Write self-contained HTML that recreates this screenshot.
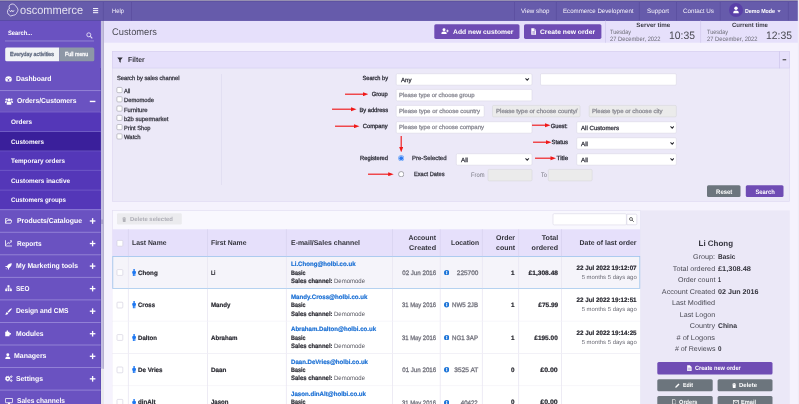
<!DOCTYPE html>
<html lang="en"><head><meta charset="utf-8"><title>Customers</title>
<style>
html,body{margin:0;padding:0;}
body{width:799px;height:404px;overflow:hidden;position:relative;font-family:"Liberation Sans",sans-serif;background:#f8f6fe;text-rendering:geometricPrecision;}
.t{white-space:nowrap;}
#app{position:absolute;left:0;top:0;width:799px;height:404px;overflow:hidden;will-change:transform;}
#app div,#app svg{position:absolute;}
#app b{font-weight:bold;}
</style></head><body><div id="app">
<svg style="left:0;top:0" width="799" height="404" viewBox="0 0 799 404">
<rect x="0" y="0" width="799" height="404" fill="#f5f2fd"/>
<rect x="0" y="20" width="104" height="384" fill="#e9e8ee"/>
<rect x="0" y="20" width="104" height="348.7" fill="#c3bde0"/>
<rect x="103.2" y="20" width="0.8" height="348.7" fill="#b3aecb"/>
<rect x="0" y="20" width="100.9" height="384" fill="#6a52c1"/>
<rect x="100" y="68" width="0.9" height="336" fill="#5d49b4"/>
<rect x="5" y="40.4" width="89" height="1.1" fill="#8e7fd2"/>
<path d="M6.7 47.4 H59.2 A0.0 0.0 0 0 1 59.2 47.4 V61.2 A0.0 0.0 0 0 1 59.2 61.2 H6.7 A1.5 1.5 0 0 1 5.2 59.7 V48.9 A1.5 1.5 0 0 1 6.7 47.4 Z" fill="#f1f3f6"/>
<path d="M59.2 47.4 H92.8 A1.5 1.5 0 0 1 94.3 48.9 V59.7 A1.5 1.5 0 0 1 92.8 61.2 H59.2 A0.0 0.0 0 0 1 59.2 61.2 V47.4 A0.0 0.0 0 0 1 59.2 47.4 Z" fill="#8d97a6"/>
<rect x="0" y="90.15" width="100.7" height="0.9" fill="#9787d8"/>
<rect x="89.8" y="100.75" width="5.6" height="1.4" fill="#fff"/>
<rect x="0" y="111.85" width="100.7" height="0.9" fill="#9787d8"/>
<rect x="0" y="112.3" width="100.7" height="19.5" fill="#5437b8"/>
<rect x="0" y="131.35" width="100.9" height="0.9" fill="#9485da"/>
<rect x="0" y="131.8" width="100.7" height="19.4" fill="#3a1f9b"/>
<rect x="0" y="150.75" width="100.9" height="0.9" fill="#9485da"/>
<rect x="0" y="151.2" width="100.7" height="19.2" fill="#5437b8"/>
<rect x="0" y="169.95" width="100.9" height="0.9" fill="#9485da"/>
<rect x="0" y="170.4" width="100.7" height="19.9" fill="#5437b8"/>
<rect x="0" y="189.85" width="100.9" height="0.9" fill="#9485da"/>
<rect x="0" y="190.3" width="100.7" height="19.4" fill="#5437b8"/>
<rect x="0" y="209.25" width="100.9" height="0.9" fill="#9485da"/>
<rect x="89.8" y="220.32" width="5.6" height="1.3" fill="#fff"/>
<rect x="91.95" y="218.17" width="1.3" height="5.6" fill="#fff"/>
<rect x="0" y="231.8" width="100.7" height="0.9" fill="#9787d8"/>
<rect x="89.8" y="242.88" width="5.6" height="1.3" fill="#fff"/>
<rect x="91.95" y="240.72" width="1.3" height="5.6" fill="#fff"/>
<rect x="0" y="254.35" width="100.7" height="0.9" fill="#9787d8"/>
<rect x="89.8" y="265.43" width="5.6" height="1.3" fill="#fff"/>
<rect x="91.95" y="263.28" width="1.3" height="5.6" fill="#fff"/>
<rect x="0" y="276.9" width="100.7" height="0.9" fill="#9787d8"/>
<rect x="89.8" y="287.98" width="5.6" height="1.3" fill="#fff"/>
<rect x="91.95" y="285.82" width="1.3" height="5.6" fill="#fff"/>
<rect x="0" y="299.45" width="100.7" height="0.9" fill="#9787d8"/>
<rect x="89.8" y="310.53" width="5.6" height="1.3" fill="#fff"/>
<rect x="91.95" y="308.38" width="1.3" height="5.6" fill="#fff"/>
<rect x="0" y="322" width="100.7" height="0.9" fill="#9787d8"/>
<rect x="89.8" y="333.08" width="5.6" height="1.3" fill="#fff"/>
<rect x="91.95" y="330.93" width="1.3" height="5.6" fill="#fff"/>
<rect x="0" y="344.55" width="100.7" height="0.9" fill="#9787d8"/>
<rect x="89.8" y="355.63" width="5.6" height="1.3" fill="#fff"/>
<rect x="91.95" y="353.48" width="1.3" height="5.6" fill="#fff"/>
<rect x="0" y="367.1" width="100.7" height="0.9" fill="#9787d8"/>
<rect x="89.8" y="378.18" width="5.6" height="1.3" fill="#fff"/>
<rect x="91.95" y="376.03" width="1.3" height="5.6" fill="#fff"/>
<rect x="0" y="389.65" width="100.7" height="0.9" fill="#9787d8"/>
<rect x="0" y="412.2" width="100.7" height="0.9" fill="#9787d8"/>
<rect x="101.6" y="219.5" width="0.8" height="4.5" fill="#7d75a8"/>
<rect x="104" y="20" width="695" height="22.7" fill="#e6e0fb"/>
<rect x="0" y="0" width="799" height="20.5" fill="#665bab"/>
<rect x="0" y="20.1" width="799" height="0.7" fill="#54479f"/>
<rect x="0" y="1" width="799" height="1" fill="#5f53a2"/>
<rect x="0" y="0" width="799" height="1" fill="#9690b1"/>
<rect x="102.9" y="2" width="0.8" height="18.4" fill="#5b4f9f"/>
<rect x="131.1" y="2" width="0.8" height="18.4" fill="#5b4f9f"/>
<rect x="514.1" y="2" width="0.8" height="18.4" fill="#5b4f9f"/>
<rect x="555.9" y="2" width="0.8" height="18.4" fill="#5b4f9f"/>
<rect x="638.9" y="2" width="0.8" height="18.4" fill="#5b4f9f"/>
<rect x="676" y="2" width="0.8" height="18.4" fill="#5b4f9f"/>
<rect x="719.8" y="2" width="0.8" height="18.4" fill="#5b4f9f"/>
<rect x="787.9" y="2" width="0.8" height="18.4" fill="#5b4f9f"/>
<rect x="93" y="8" width="5.2" height="1.1" fill="#f0eefa"/>
<rect x="93" y="10.05" width="5.2" height="1.1" fill="#f0eefa"/>
<rect x="93" y="12.1" width="5.2" height="1.1" fill="#f0eefa"/>
<rect x="797.8" y="0" width="1.2" height="404" fill="#efedf7"/>
<rect x="605.2" y="20.6" width="0.8" height="22.1" fill="#d3cbee"/>
<rect x="700.3" y="20.6" width="0.8" height="22.1" fill="#d3cbee"/>
<rect x="434.3" y="24.2" width="85.2" height="14.7" rx="1.6" fill="#6f4cb4"/>
<rect x="524" y="24.2" width="77.4" height="14.7" rx="1.6" fill="#6f4cb4"/>
<rect x="112.35" y="51.55" width="677" height="149.8" fill="#ece9f8" stroke="#e0dbf3" stroke-width="0.7"/>
<rect x="112.35" y="51.55" width="677" height="16.5" fill="#e6e0fb" stroke="#d8d1f1" stroke-width="0.7"/>
<rect x="779.2" y="51.2" width="0.8" height="17.2" fill="#d1c9ee"/>
<rect x="782.6" y="59.2" width="3.6" height="1.1" fill="#444"/>
<rect x="221" y="74" width="0.8" height="111" fill="#e0dcf0"/>
<rect x="116.9" y="87.45" width="5.2" height="5.2" rx="1.0" fill="#fff" stroke="#9e9ea8" stroke-width="0.6"/>
<rect x="116.9" y="96.72" width="5.2" height="5.2" rx="1.0" fill="#fff" stroke="#9e9ea8" stroke-width="0.6"/>
<rect x="116.9" y="105.99" width="5.2" height="5.2" rx="1.0" fill="#fff" stroke="#9e9ea8" stroke-width="0.6"/>
<rect x="116.9" y="115.26" width="5.2" height="5.2" rx="1.0" fill="#fff" stroke="#9e9ea8" stroke-width="0.6"/>
<rect x="116.9" y="124.53" width="5.2" height="5.2" rx="1.0" fill="#fff" stroke="#9e9ea8" stroke-width="0.6"/>
<rect x="116.9" y="133.8" width="5.2" height="5.2" rx="1.0" fill="#fff" stroke="#9e9ea8" stroke-width="0.6"/>
<rect x="396.2" y="73.7" width="135.8" height="11.5" rx="1.2" fill="#fff" stroke="#dad7e6" stroke-width="0.6"/>
<rect x="540.5" y="73.7" width="135.8" height="11.5" rx="1.2" fill="#fff" stroke="#dad7e6" stroke-width="0.6"/>
<rect x="396.2" y="89.4" width="135.8" height="11.5" rx="1.2" fill="#fff" stroke="#dad7e6" stroke-width="0.6"/>
<rect x="396.2" y="105.4" width="88" height="11.5" rx="1.2" fill="#fff" stroke="#dad7e6" stroke-width="0.6"/>
<rect x="492.5" y="105.4" width="87.5" height="11.5" rx="1.2" fill="#ebebeb" stroke="#d6d6da" stroke-width="0.6"/>
<rect x="589.2" y="105.4" width="87.1" height="11.5" rx="1.2" fill="#ebebeb" stroke="#d6d6da" stroke-width="0.6"/>
<rect x="396.2" y="121.7" width="135.8" height="11.5" rx="1.2" fill="#fff" stroke="#dad7e6" stroke-width="0.6"/>
<rect x="576.7" y="121.7" width="99.6" height="11.5" rx="1.2" fill="#fff" stroke="#dad7e6" stroke-width="0.6"/>
<rect x="576.7" y="137.7" width="99.6" height="11.5" rx="1.2" fill="#fff" stroke="#dad7e6" stroke-width="0.6"/>
<rect x="576.7" y="153.7" width="99.6" height="11.5" rx="1.2" fill="#fff" stroke="#dad7e6" stroke-width="0.6"/>
<rect x="456.3" y="153.7" width="75.7" height="11.5" rx="1.2" fill="#fff" stroke="#dad7e6" stroke-width="0.6"/>
<rect x="488" y="169.4" width="44" height="11.5" rx="1.2" fill="#ebebeb" stroke="#d6d6da" stroke-width="0.6"/>
<rect x="548.3" y="169.4" width="43.8" height="11.5" rx="1.2" fill="#ebebeb" stroke="#d6d6da" stroke-width="0.6"/>
<rect x="707" y="185.3" width="33.5" height="11.7" rx="1.5" fill="#6c757d"/>
<rect x="745.8" y="185.3" width="37.7" height="11.7" rx="1.5" fill="#6f4cb4"/>
<rect x="112.35" y="210.55" width="528.1" height="199.3" fill="#f9f8fe" stroke="#e4e0f2" stroke-width="0.7"/>
<rect x="117" y="213.3" width="64.8" height="11.3" rx="1.4" fill="#ebebee"/>
<rect x="553" y="213.7" width="73.4" height="11.2" rx="1.2" fill="#fff" stroke="#dad7e6" stroke-width="0.6"/>
<path d="M626.75 214.15 H635.65 A1.2 1.2 0 0 1 636.85 215.35 V223.55 A1.2 1.2 0 0 1 635.65 224.75 H626.75 A0.0 0.0 0 0 1 626.75 224.75 V214.15 A0.0 0.0 0 0 1 626.75 214.15 Z" fill="#fff" stroke="#d8d4e6" stroke-width="0.7"/>
<rect x="112.4" y="229.3" width="527.8" height="27.2" fill="#e6e0fb"/>
<rect x="127.9" y="229.3" width="0.8" height="26.7" fill="#d9d3f0"/>
<rect x="207.1" y="229.3" width="0.8" height="26.7" fill="#d9d3f0"/>
<rect x="285.9" y="229.3" width="0.8" height="26.7" fill="#d9d3f0"/>
<rect x="392.1" y="229.3" width="0.8" height="26.7" fill="#d9d3f0"/>
<rect x="439.8" y="229.3" width="0.8" height="26.7" fill="#d9d3f0"/>
<rect x="481.9" y="229.3" width="0.8" height="26.7" fill="#d9d3f0"/>
<rect x="518.3" y="229.3" width="0.8" height="26.7" fill="#d9d3f0"/>
<rect x="561.2" y="229.3" width="0.8" height="26.7" fill="#d9d3f0"/>
<rect x="117" y="240.4" width="5.8" height="5.8" rx="0.8" fill="#fff" stroke="#cfcbdc" stroke-width="0.6"/>
<rect x="112.8" y="256.5" width="527" height="32" fill="#f5f4fa" stroke="#9cc3ec" stroke-width="0.8"/>
<rect x="127.9" y="256.9" width="0.8" height="31.2" fill="#e9e6f2"/>
<rect x="207.1" y="256.9" width="0.8" height="31.2" fill="#e9e6f2"/>
<rect x="285.9" y="256.9" width="0.8" height="31.2" fill="#e9e6f2"/>
<rect x="392.1" y="256.9" width="0.8" height="31.2" fill="#e9e6f2"/>
<rect x="439.8" y="256.9" width="0.8" height="31.2" fill="#e9e6f2"/>
<rect x="481.9" y="256.9" width="0.8" height="31.2" fill="#e9e6f2"/>
<rect x="518.3" y="256.9" width="0.8" height="31.2" fill="#e9e6f2"/>
<rect x="561.2" y="256.9" width="0.8" height="31.2" fill="#e9e6f2"/>
<rect x="117" y="269.6" width="5.8" height="5.8" rx="0.8" fill="#fff" stroke="#cfcbdc" stroke-width="0.6"/>
<rect x="112.4" y="288.9" width="527.8" height="32.4" fill="#fff"/>
<rect x="112.4" y="320.9" width="527.8" height="0.8" fill="#e6e3ef"/>
<rect x="127.9" y="288.9" width="0.8" height="32.4" fill="#e9e6f2"/>
<rect x="207.1" y="288.9" width="0.8" height="32.4" fill="#e9e6f2"/>
<rect x="285.9" y="288.9" width="0.8" height="32.4" fill="#e9e6f2"/>
<rect x="392.1" y="288.9" width="0.8" height="32.4" fill="#e9e6f2"/>
<rect x="439.8" y="288.9" width="0.8" height="32.4" fill="#e9e6f2"/>
<rect x="481.9" y="288.9" width="0.8" height="32.4" fill="#e9e6f2"/>
<rect x="518.3" y="288.9" width="0.8" height="32.4" fill="#e9e6f2"/>
<rect x="561.2" y="288.9" width="0.8" height="32.4" fill="#e9e6f2"/>
<rect x="117" y="302.2" width="5.8" height="5.8" rx="0.8" fill="#fff" stroke="#cfcbdc" stroke-width="0.6"/>
<rect x="112.4" y="321.3" width="527.8" height="32.4" fill="#fff"/>
<rect x="112.4" y="353.3" width="527.8" height="0.8" fill="#e6e3ef"/>
<rect x="127.9" y="321.3" width="0.8" height="32.4" fill="#e9e6f2"/>
<rect x="207.1" y="321.3" width="0.8" height="32.4" fill="#e9e6f2"/>
<rect x="285.9" y="321.3" width="0.8" height="32.4" fill="#e9e6f2"/>
<rect x="392.1" y="321.3" width="0.8" height="32.4" fill="#e9e6f2"/>
<rect x="439.8" y="321.3" width="0.8" height="32.4" fill="#e9e6f2"/>
<rect x="481.9" y="321.3" width="0.8" height="32.4" fill="#e9e6f2"/>
<rect x="518.3" y="321.3" width="0.8" height="32.4" fill="#e9e6f2"/>
<rect x="561.2" y="321.3" width="0.8" height="32.4" fill="#e9e6f2"/>
<rect x="117" y="334.6" width="5.8" height="5.8" rx="0.8" fill="#fff" stroke="#cfcbdc" stroke-width="0.6"/>
<rect x="112.4" y="353.7" width="527.8" height="32.4" fill="#fff"/>
<rect x="112.4" y="385.7" width="527.8" height="0.8" fill="#e6e3ef"/>
<rect x="127.9" y="353.7" width="0.8" height="32.4" fill="#e9e6f2"/>
<rect x="207.1" y="353.7" width="0.8" height="32.4" fill="#e9e6f2"/>
<rect x="285.9" y="353.7" width="0.8" height="32.4" fill="#e9e6f2"/>
<rect x="392.1" y="353.7" width="0.8" height="32.4" fill="#e9e6f2"/>
<rect x="439.8" y="353.7" width="0.8" height="32.4" fill="#e9e6f2"/>
<rect x="481.9" y="353.7" width="0.8" height="32.4" fill="#e9e6f2"/>
<rect x="518.3" y="353.7" width="0.8" height="32.4" fill="#e9e6f2"/>
<rect x="561.2" y="353.7" width="0.8" height="32.4" fill="#e9e6f2"/>
<rect x="117" y="367" width="5.8" height="5.8" rx="0.8" fill="#fff" stroke="#cfcbdc" stroke-width="0.6"/>
<rect x="112.4" y="386.1" width="527.8" height="32.4" fill="#fff"/>
<rect x="112.4" y="418.1" width="527.8" height="0.8" fill="#e6e3ef"/>
<rect x="127.9" y="386.1" width="0.8" height="32.4" fill="#e9e6f2"/>
<rect x="207.1" y="386.1" width="0.8" height="32.4" fill="#e9e6f2"/>
<rect x="285.9" y="386.1" width="0.8" height="32.4" fill="#e9e6f2"/>
<rect x="392.1" y="386.1" width="0.8" height="32.4" fill="#e9e6f2"/>
<rect x="439.8" y="386.1" width="0.8" height="32.4" fill="#e9e6f2"/>
<rect x="481.9" y="386.1" width="0.8" height="32.4" fill="#e9e6f2"/>
<rect x="518.3" y="386.1" width="0.8" height="32.4" fill="#e9e6f2"/>
<rect x="561.2" y="386.1" width="0.8" height="32.4" fill="#e9e6f2"/>
<rect x="117" y="399.4" width="5.8" height="5.8" rx="0.8" fill="#fff" stroke="#cfcbdc" stroke-width="0.6"/>
<rect x="640.8" y="210.4" width="149" height="193.6" fill="#ebe8f7"/>
<rect x="657.3" y="362" width="115.2" height="12.4" rx="1.5" fill="#6f4cb4"/>
<rect x="657.3" y="379.3" width="55.4" height="12" rx="1.5" fill="#6c757d"/>
<rect x="717.6" y="379.3" width="54.9" height="12" rx="1.5" fill="#6c757d"/>
<rect x="657.3" y="396" width="55.4" height="12" rx="1.5" fill="#6c757d"/>
<rect x="717.6" y="396" width="54.9" height="12" rx="1.5" fill="#6c757d"/>
</svg>
<svg style="left:4px;top:1px" width="20" height="18" viewBox="0 0 449 404"><g fill="none" stroke="#e4e0f4" stroke-linecap="round" stroke-linejoin="round"><path d="M118 165 C98 108 138 68 185 68 C222 68 244 84 260 106 L300 160 C322 192 314 232 292 254 C284 292 252 314 218 318 A90 90 0 1 1 118 165 Z" stroke-width="20"/><path d="M128 213 L150 246 L175 204 L200 246 L222 213" stroke-width="15" stroke="#fff"/></g></svg>
<div class="t" style="top:2.76px;font-size:11.8px;line-height:14.16px;color:rgba(255,255,255,0.82);left:19.5px;transform-origin:0 50%;transform:scaleX(0.936) skewY(0.05deg);">oscommerce</div>
<div class="t" style="top:7.77px;font-size:6.3px;line-height:7.56px;color:#f6f4fc;left:111.5px;transform-origin:0 50%;transform:scaleX(0.926) skewY(0.05deg);">Help</div>
<div class="t" style="top:7.77px;font-size:6.3px;line-height:7.56px;color:#f6f4fc;left:520.5px;transform-origin:0 50%;transform:scaleX(0.984) skewY(0.05deg);">View shop</div>
<div class="t" style="top:7.77px;font-size:6.3px;line-height:7.56px;color:#f6f4fc;left:562.5px;transform-origin:0 50%;transform:scaleX(0.973) skewY(0.05deg);">Ecommerce Development</div>
<div class="t" style="top:7.77px;font-size:6.3px;line-height:7.56px;color:#f6f4fc;left:647px;transform-origin:0 50%;transform:scaleX(0.997) skewY(0.05deg);">Support</div>
<div class="t" style="top:7.77px;font-size:6.3px;line-height:7.56px;color:#f6f4fc;left:683px;transform-origin:0 50%;transform:scaleX(0.995) skewY(0.05deg);">Contact Us</div>
<svg style="left:729px;top:3.3px" width="14" height="14" viewBox="0 0 14 14"><circle cx="7" cy="7" r="7" fill="#5a40a8"/><circle cx="7" cy="5.2" r="1.7" fill="#fff"/><path d="M4.2 10.3 C4.2 8 5.2 7.4 7 7.4 C8.8 7.4 9.8 8 9.8 10.3 Z" fill="#fff"/></svg>
<div class="t" style="top:8.60px;font-size:5.8px;line-height:6.96px;color:#fff;font-weight:bold;left:745px;transform-origin:0 50%;transform:scaleX(0.913) skewY(0.05deg);">Demo Mode</div>
<svg style="left:777px;top:9.6px" width="4" height="3" viewBox="0 0 4 3"><path d="M0.3 0.3 L3.7 0.3 L2 2.6 Z" fill="#e8e4f6"/></svg>
<div class="t" style="top:30.17px;font-size:6.3px;line-height:7.56px;color:#fff;font-weight:bold;left:8px;transform-origin:0 50%;transform:scaleX(0.914) skewY(0.05deg);">Search...</div>
<svg style="left:85.5px;top:31.5px" width="7" height="7" viewBox="0 0 7 7"><circle cx="2.8" cy="2.8" r="2" fill="none" stroke="#e6e1f7" stroke-width="0.9"/><path d="M4.3 4.3 L6.3 6.3" stroke="#e6e1f7" stroke-width="1.1"/></svg>
<div class="t" style="top:52.30px;font-size:5.8px;line-height:6.96px;color:#57627a;left:10px;transform-origin:0 50%;transform:scaleX(0.916) skewY(0.05deg);-webkit-text-stroke:0.29px #57627a;">Everyday activities</div>
<div class="t" style="top:52.30px;font-size:5.8px;line-height:6.96px;color:#fff;left:65.1px;transform-origin:0 50%;transform:scaleX(0.911) skewY(0.05deg);-webkit-text-stroke:0.29px #fff;">Full menu</div>
<div class="t" style="top:75.34px;font-size:7.1px;line-height:8.52px;color:#fff;font-weight:bold;left:16px;transform-origin:0 50%;transform:scaleX(0.958) skewY(0.05deg);">Dashboard</div>
<svg style="left:4.8px;top:76.1px" width="7" height="6" viewBox="0 0 14 12"><path d="M7 0.5 A6.5 6.5 0 0 0 0.5 7 C0.5 8.6 1 10 1.9 11.2 L12.1 11.2 C13 10 13.5 8.6 13.5 7 A6.5 6.5 0 0 0 7 0.5 Z" fill="#fff"/><circle cx="7" cy="8" r="1.8" fill="#6a52c1"/><circle cx="4" cy="5" r="1" fill="#6a52c1"/><circle cx="10" cy="5" r="1" fill="#6a52c1"/></svg>
<div class="t" style="top:97.49px;font-size:7.1px;line-height:8.52px;color:#fff;font-weight:bold;left:16.5px;transform-origin:0 50%;transform:scaleX(0.955) skewY(0.05deg);">Orders/Customers</div>
<svg style="left:4.8px;top:97.85px" width="8" height="7" viewBox="0 0 16 14"><circle cx="8" cy="3.6" r="3" fill="#fff"/><circle cx="3" cy="3" r="2.2" fill="#fff"/><circle cx="13" cy="3" r="2.2" fill="#fff"/><path d="M3.5 13.5 L3.5 10 C3.5 7.8 5 7 8 7 C11 7 12.5 7.8 12.5 10 L12.5 13.5 Z" fill="#fff"/><path d="M0.3 10 L0.3 8 C0.3 6.4 1.3 5.6 3.2 5.6 L4 5.8 C3 6.8 2.8 8 2.8 10 Z M15.7 10 L15.7 8 C15.7 6.4 14.7 5.6 12.8 5.6 L12 5.8 C13 6.8 13.2 8 13.2 10 Z" fill="#fff"/></svg>
<div class="t" style="top:119.42px;font-size:6.6px;line-height:7.92px;color:#fff;font-weight:bold;left:11px;transform-origin:0 50%;transform:scaleX(0.971) skewY(0.05deg);">Orders</div>
<div class="t" style="top:138.87px;font-size:6.6px;line-height:7.92px;color:#fff;font-weight:bold;left:11px;transform-origin:0 50%;transform:scaleX(0.958) skewY(0.05deg);">Customers</div>
<div class="t" style="top:158.17px;font-size:6.6px;line-height:7.92px;color:#fff;font-weight:bold;left:11px;transform-origin:0 50%;transform:scaleX(0.965) skewY(0.05deg);">Temporary orders</div>
<div class="t" style="top:177.72px;font-size:6.6px;line-height:7.92px;color:#fff;font-weight:bold;left:11px;transform-origin:0 50%;transform:scaleX(0.970) skewY(0.05deg);">Customers inactive</div>
<div class="t" style="top:197.37px;font-size:6.6px;line-height:7.92px;color:#fff;font-weight:bold;left:11px;transform-origin:0 50%;transform:scaleX(0.938) skewY(0.05deg);">Customers groups</div>
<div class="t" style="top:217.02px;font-size:7.1px;line-height:8.52px;color:#fff;font-weight:bold;left:16.5px;transform-origin:0 50%;transform:scaleX(0.970) skewY(0.05deg);">Products/Catalogue</div>
<svg style="left:4.8px;top:217.775px" width="7.5" height="6" viewBox="0 0 15 12"><path d="M1 10.5 L1 1.2 L4.8 1.2 L6 2.6 L11 2.6 L11 4.6 M1 10.5 L3.5 4.8 L14 4.8 L11.6 10.5 Z" fill="none" stroke="#fff" stroke-width="1.5" stroke-linejoin="round"/></svg>
<div class="t" style="top:239.57px;font-size:7.1px;line-height:8.52px;color:#fff;font-weight:bold;left:16.8px;transform-origin:0 50%;transform:scaleX(0.914) skewY(0.05deg);">Reports</div>
<svg style="left:4.8px;top:240.125px" width="7.5" height="6.5" viewBox="0 0 15 13"><path d="M1 0.5 L1 12 L14.5 12" fill="none" stroke="#fff" stroke-width="1.6"/><path d="M3 9 L6.2 5 L8.6 7.2 L12.6 2.4" fill="none" stroke="#fff" stroke-width="1.6"/><path d="M10 1.5 L13.6 1.5 L13.6 5" fill="none" stroke="#fff" stroke-width="1.4"/></svg>
<div class="t" style="top:262.12px;font-size:7.1px;line-height:8.52px;color:#fff;font-weight:bold;left:16px;transform-origin:0 50%;transform:scaleX(0.965) skewY(0.05deg);">My Marketing tools</div>
<svg style="left:4.8px;top:262.67500000000007px" width="7" height="7" viewBox="0 0 14 14"><path d="M13.5 0.5 C9 0.5 6 2.5 4.2 5.8 L1 6.2 L0.4 7.6 L3.4 8 L6 10.6 L6.4 13.6 L7.8 13 L8.2 9.8 C11.5 8 13.5 5 13.5 0.5 Z" fill="#fff"/><path d="M1 11 L3.2 10.8 L3 13 Z" fill="#fff"/></svg>
<div class="t" style="top:284.67px;font-size:7.1px;line-height:8.52px;color:#fff;font-weight:bold;left:16px;transform-origin:0 50%;transform:scaleX(0.901) skewY(0.05deg);">SEO</div>
<svg style="left:4.8px;top:285.425px" width="7" height="6.4" viewBox="0 0 14 13"><rect x="5" y="0.5" width="4" height="4" fill="#fff"/><rect x="0.3" y="8.5" width="3.6" height="4" fill="#fff"/><rect x="5.2" y="8.5" width="3.6" height="4" fill="#fff"/><rect x="10.1" y="8.5" width="3.6" height="4" fill="#fff"/><path d="M7 4 L7 9 M2 9 L2 6.5 L12 6.5 L12 9" fill="none" stroke="#fff" stroke-width="1.2"/></svg>
<div class="t" style="top:307.22px;font-size:7.1px;line-height:8.52px;color:#fff;font-weight:bold;left:16px;transform-origin:0 50%;transform:scaleX(0.938) skewY(0.05deg);">Design and CMS</div>
<svg style="left:4.8px;top:307.7750000000001px" width="7" height="7" viewBox="0 0 14 14"><path d="M13 0.6 C11 1 7 5 5.2 7.6 L7 9.4 C9.6 7.4 13.4 3 13.6 1.2 Z" fill="#fff"/><path d="M4.4 8.4 C2.6 8.4 2 9.8 1.8 11 C1.6 12 1 12.6 0.4 12.8 C2.4 13.8 6.2 13.4 6.4 10.4 Z" fill="#fff"/></svg>
<div class="t" style="top:329.77px;font-size:7.1px;line-height:8.52px;color:#fff;font-weight:bold;left:16px;transform-origin:0 50%;transform:scaleX(0.955) skewY(0.05deg);">Modules</div>
<svg style="left:5px;top:330.425px" width="6.4" height="6.4" viewBox="0 0 14 14"><path d="M0.5 4 L3.6 4 C3 1.6 4 0.5 5 0.5 C6 0.5 7 1.6 6.4 4 L9.8 4 L9.8 7 C12 6.4 13.5 7.4 13.5 8.6 C13.5 9.8 12 10.8 9.8 10.2 L9.8 13.5 L0.5 13.5 Z" fill="#fff"/></svg>
<div class="t" style="top:352.32px;font-size:7.1px;line-height:8.52px;color:#fff;font-weight:bold;left:14px;transform-origin:0 50%;transform:scaleX(0.981) skewY(0.05deg);">Managers</div>
<svg style="left:5.2px;top:353.0750000000001px" width="5.6" height="6.4" viewBox="0 0 11 13"><circle cx="5.5" cy="3.4" r="3" fill="#fff"/><path d="M0.4 12.6 C0.4 8.6 2 7 5.5 7 C9 7 10.6 8.6 10.6 12.6 Z" fill="#fff"/></svg>
<div class="t" style="top:374.87px;font-size:7.1px;line-height:8.52px;color:#fff;font-weight:bold;left:16px;transform-origin:0 50%;transform:scaleX(0.965) skewY(0.05deg);">Settings</div>
<svg style="left:4.6px;top:375.225px" width="8" height="7" viewBox="0 0 16 14"><circle cx="5.4" cy="7.2" r="3.3" fill="none" stroke="#fff" stroke-width="2.8"/><circle cx="5.4" cy="7.2" r="4.9" fill="none" stroke="#fff" stroke-width="1.4" stroke-dasharray="1.9 1.95"/><circle cx="12.6" cy="3.3" r="1.5" fill="none" stroke="#fff" stroke-width="1.9"/><circle cx="12.6" cy="11.2" r="1.5" fill="none" stroke="#fff" stroke-width="1.9"/></svg>
<div class="t" style="top:397.42px;font-size:7.1px;line-height:8.52px;color:#fff;font-weight:bold;left:16.8px;transform-origin:0 50%;transform:scaleX(0.936) skewY(0.05deg);">Sales channels</div>
<svg style="left:4.8px;top:398.1750000000001px" width="8" height="6.6" viewBox="0 0 16 13"><rect x="0.8" y="0.8" width="14.4" height="8.6" rx="1" fill="none" stroke="#fff" stroke-width="1.6"/><path d="M6.4 9.6 L5.8 12.2 L10.2 12.2 L9.6 9.6 Z" fill="#fff"/></svg>
<div class="t" style="top:26.90px;font-size:9.6px;line-height:11.52px;color:#4c4c55;left:112px;transform-origin:0 50%;transform:scaleX(0.970) skewY(0.05deg);">Customers</div>
<div class="t" style="top:28.92px;font-size:6.6px;line-height:7.92px;color:#fff;font-weight:bold;left:452.5px;transform-origin:0 50%;transform:scaleX(1.025) skewY(0.05deg);">Add new customer</div>
<svg style="left:440.5px;top:28.4px" width="8" height="6.4" viewBox="0 0 16 13"><circle cx="6" cy="3.4" r="3" fill="#fff"/><path d="M0.6 12.4 C0.6 8.6 2.2 7.2 6 7.2 C9.8 7.2 11.4 8.6 11.4 12.4 Z" fill="#fff"/><path d="M13 3.4 L13 8.6 M10.4 6 L15.6 6" stroke="#fff" stroke-width="1.6"/></svg>
<div class="t" style="top:28.92px;font-size:6.6px;line-height:7.92px;color:#fff;font-weight:bold;left:540.3px;transform-origin:0 50%;transform:scaleX(1.021) skewY(0.05deg);">Create new order</div>
<svg style="left:530.5px;top:28px" width="5.6" height="7" viewBox="0 0 11 14"><path d="M0.5 0.5 L6.5 0.5 L10.5 4.5 L10.5 13.5 L0.5 13.5 Z" fill="#fff"/><path d="M6.5 0.5 L6.5 4.5 L10.5 4.5" fill="none" stroke="#6f4cb4" stroke-width="1"/><path d="M2.6 7 L8.4 7 M2.6 9.2 L8.4 9.2 M2.6 11.4 L8.4 11.4" stroke="#6f4cb4" stroke-width="0.9"/></svg>
<div class="t" style="top:21.53px;font-size:6.2px;line-height:7.44px;color:#3c3c46;font-weight:bold;left:636.14px;width:34.72px;text-align:center;transform-origin:50% 50%;transform:scaleX(1.008) skewY(0.05deg);">Server time</div>
<div class="t" style="top:29.37px;font-size:6.3px;line-height:7.56px;color:#6c6c76;left:609.8px;transform-origin:0 50%;transform:scaleX(0.878) skewY(0.05deg);">Tuesday</div>
<div class="t" style="top:35.67px;font-size:6.3px;line-height:7.56px;color:#6c6c76;left:609.8px;transform-origin:0 50%;transform:scaleX(0.919) skewY(0.05deg);">27 December, 2022</div>
<div class="t" style="top:29.52px;font-size:10.8px;line-height:12.96px;color:#4a4a52;left:668.6px;transform-origin:0 50%;transform:scaleX(0.962) skewY(0.05deg);">10:35</div>
<div class="t" style="top:21.53px;font-size:6.2px;line-height:7.44px;color:#3c3c46;font-weight:bold;left:731.10px;width:37.80px;text-align:center;transform-origin:50% 50%;transform:scaleX(0.978) skewY(0.05deg);">Current time</div>
<div class="t" style="top:29.37px;font-size:6.3px;line-height:7.56px;color:#6c6c76;left:707px;transform-origin:0 50%;transform:scaleX(0.878) skewY(0.05deg);">Tuesday</div>
<div class="t" style="top:35.67px;font-size:6.3px;line-height:7.56px;color:#6c6c76;left:707px;transform-origin:0 50%;transform:scaleX(0.919) skewY(0.05deg);">27 December, 2022</div>
<div class="t" style="top:29.52px;font-size:10.8px;line-height:12.96px;color:#4a4a52;left:766.2px;transform-origin:0 50%;transform:scaleX(0.962) skewY(0.05deg);">12:35</div>
<svg style="left:117.2px;top:57px" width="6" height="6" viewBox="0 0 12 12"><path d="M0.5 0.8 L11.5 0.8 L7.4 5.8 L7.4 11.4 L4.6 9.6 L4.6 5.8 Z" fill="#2f2f38"/></svg>
<div class="t" style="top:56.38px;font-size:7.2px;line-height:8.64px;color:#2f2f38;font-weight:bold;left:127.8px;transform-origin:0 50%;transform:scaleX(0.944) skewY(0.05deg);">Filter</div>
<div class="t" style="top:75.66px;font-size:6.0px;line-height:7.20px;color:#3a3a44;left:117px;transform-origin:0 50%;transform:scaleX(0.956) skewY(0.05deg);-webkit-text-stroke:0.30px #3a3a44;">Search by sales channel</div>
<div class="t" style="top:88.96px;font-size:6.0px;line-height:7.20px;color:#3e3e48;left:123.6px;transform-origin:0 50%;transform:scaleX(0.944) skewY(0.05deg);-webkit-text-stroke:0.30px #3e3e48;">All</div>
<div class="t" style="top:98.23px;font-size:6.0px;line-height:7.20px;color:#3e3e48;left:123.6px;transform-origin:0 50%;transform:scaleX(0.967) skewY(0.05deg);-webkit-text-stroke:0.30px #3e3e48;">Demomode</div>
<div class="t" style="top:107.50px;font-size:6.0px;line-height:7.20px;color:#3e3e48;left:123.6px;transform-origin:0 50%;transform:scaleX(0.979) skewY(0.05deg);-webkit-text-stroke:0.30px #3e3e48;">Furniture</div>
<div class="t" style="top:116.77px;font-size:6.0px;line-height:7.20px;color:#3e3e48;left:123.6px;transform-origin:0 50%;transform:scaleX(0.988) skewY(0.05deg);-webkit-text-stroke:0.30px #3e3e48;">b2b supermarket</div>
<div class="t" style="top:126.04px;font-size:6.0px;line-height:7.20px;color:#3e3e48;left:123.6px;transform-origin:0 50%;transform:scaleX(0.945) skewY(0.05deg);-webkit-text-stroke:0.30px #3e3e48;">Print Shop</div>
<div class="t" style="top:135.31px;font-size:6.0px;line-height:7.20px;color:#3e3e48;left:123.6px;transform-origin:0 50%;transform:scaleX(0.983) skewY(0.05deg);-webkit-text-stroke:0.30px #3e3e48;">Watch</div>
<div class="t" style="top:76.06px;font-size:6.0px;line-height:7.20px;color:#30303a;right:411.40px;transform-origin:100% 50%;transform:scaleX(0.944) skewY(0.05deg);-webkit-text-stroke:0.36px #30303a;-webkit-text-stroke:0.30px #30303a;">Search by</div>
<div class="t" style="top:77.86px;font-size:6.0px;line-height:7.20px;color:#3a3a44;left:400.5px;transform-origin:0 50%;transform:scaleX(1.015) skewY(0.05deg);-webkit-text-stroke:0.30px #3a3a44;">Any</div>
<svg style="left:525.4px;top:78.3px" width="4.4" height="3" viewBox="0 0 9 6"><path d="M1 0.9 L4.5 4.4 L8 0.9" fill="none" stroke="#2c2c34" stroke-width="2.1"/></svg>
<div class="t" style="top:92.06px;font-size:6.0px;line-height:7.20px;color:#30303a;right:411.40px;transform-origin:100% 50%;transform:scaleX(0.959) skewY(0.05deg);-webkit-text-stroke:0.36px #30303a;-webkit-text-stroke:0.30px #30303a;">Group</div>
<svg style="left:344.5px;top:91.6px" width="23.5" height="4.4" viewBox="0 0 23.5 4.4"><path d="M0 2.2 L19.5 2.2" stroke="#f01818" stroke-width="1.15"/><path d="M23.5 2.2 L18.0 0.2 L18.0 4.2 Z" fill="#f01818"/></svg>
<div class="t" style="top:93.03px;font-size:5.9px;line-height:7.08px;color:#8c8c96;left:399.4px;transform-origin:0 50%;transform:scaleX(1.007) skewY(0.05deg);-webkit-text-stroke:0.30px #8c8c96;">Please type or choose group</div>
<div class="t" style="top:108.06px;font-size:6.0px;line-height:7.20px;color:#30303a;right:411.40px;transform-origin:100% 50%;transform:scaleX(0.950) skewY(0.05deg);-webkit-text-stroke:0.36px #30303a;-webkit-text-stroke:0.30px #30303a;">By address</div>
<svg style="left:332px;top:107.39999999999999px" width="24.5" height="4.4" viewBox="0 0 24.5 4.4"><path d="M0 2.2 L20.5 2.2" stroke="#f01818" stroke-width="1.15"/><path d="M24.5 2.2 L19.0 0.2 L19.0 4.2 Z" fill="#f01818"/></svg>
<div class="t" style="top:109.03px;font-size:5.9px;line-height:7.08px;color:#8c8c96;left:399.4px;transform-origin:0 50%;transform:scaleX(1.022) skewY(0.05deg);-webkit-text-stroke:0.30px #8c8c96;">Please type or choose country</div>
<div class="t" style="top:109.03px;font-size:5.9px;line-height:7.08px;color:#8e8e96;left:495.7px;transform-origin:0 50%;transform:scaleX(1.033) skewY(0.05deg);-webkit-text-stroke:0.30px #8e8e96;">Please type or choose county/</div>
<div class="t" style="top:109.03px;font-size:5.9px;line-height:7.08px;color:#8e8e96;left:592.4000000000001px;transform-origin:0 50%;transform:scaleX(1.025) skewY(0.05deg);-webkit-text-stroke:0.30px #8e8e96;">Please type or choose city</div>
<div class="t" style="top:124.06px;font-size:6.0px;line-height:7.20px;color:#30303a;right:411.40px;transform-origin:100% 50%;transform:scaleX(0.973) skewY(0.05deg);-webkit-text-stroke:0.36px #30303a;-webkit-text-stroke:0.30px #30303a;">Company</div>
<svg style="left:335px;top:123.6px" width="24.5" height="4.4" viewBox="0 0 24.5 4.4"><path d="M0 2.2 L20.5 2.2" stroke="#f01818" stroke-width="1.15"/><path d="M24.5 2.2 L19.0 0.2 L19.0 4.2 Z" fill="#f01818"/></svg>
<div class="t" style="top:125.33px;font-size:5.9px;line-height:7.08px;color:#8c8c96;left:399.4px;transform-origin:0 50%;transform:scaleX(1.014) skewY(0.05deg);-webkit-text-stroke:0.30px #8c8c96;">Please type or choose company</div>
<svg style="left:399.1px;top:135.8px" width="4.4" height="16.399999999999977" viewBox="0 0 4.4 16.399999999999977"><path d="M2.2 0 L2.2 12.399999999999977" stroke="#f01818" stroke-width="1.15"/><path d="M2.2 16.399999999999977 L0.2 10.899999999999977 L4.2 10.899999999999977 Z" fill="#f01818"/></svg>
<div class="t" style="top:124.06px;font-size:6.0px;line-height:7.20px;color:#30303a;right:231.00px;transform-origin:100% 50%;transform:scaleX(0.961) skewY(0.05deg);-webkit-text-stroke:0.36px #30303a;-webkit-text-stroke:0.30px #30303a;">Guest:</div>
<svg style="left:532px;top:123.39999999999999px" width="18.5" height="4.4" viewBox="0 0 18.5 4.4"><path d="M0 2.2 L14.5 2.2" stroke="#f01818" stroke-width="1.15"/><path d="M18.5 2.2 L13.0 0.2 L13.0 4.2 Z" fill="#f01818"/></svg>
<div class="t" style="top:125.86px;font-size:6.0px;line-height:7.20px;color:#3a3a44;left:581.0px;transform-origin:0 50%;transform:scaleX(1.018) skewY(0.05deg);-webkit-text-stroke:0.30px #3a3a44;">All Customers</div>
<svg style="left:669.7px;top:126.3px" width="4.4" height="3" viewBox="0 0 9 6"><path d="M1 0.9 L4.5 4.4 L8 0.9" fill="none" stroke="#2c2c34" stroke-width="2.1"/></svg>
<div class="t" style="top:140.06px;font-size:6.0px;line-height:7.20px;color:#30303a;right:231.00px;transform-origin:100% 50%;transform:scaleX(0.970) skewY(0.05deg);-webkit-text-stroke:0.36px #30303a;-webkit-text-stroke:0.30px #30303a;">Status</div>
<svg style="left:533px;top:140.0px" width="18.5" height="4.4" viewBox="0 0 18.5 4.4"><path d="M0 2.2 L14.5 2.2" stroke="#f01818" stroke-width="1.15"/><path d="M18.5 2.2 L13.0 0.2 L13.0 4.2 Z" fill="#f01818"/></svg>
<div class="t" style="top:141.86px;font-size:6.0px;line-height:7.20px;color:#3a3a44;left:581.0px;transform-origin:0 50%;transform:scaleX(1.049) skewY(0.05deg);-webkit-text-stroke:0.30px #3a3a44;">All</div>
<svg style="left:669.7px;top:142.3px" width="4.4" height="3" viewBox="0 0 9 6"><path d="M1 0.9 L4.5 4.4 L8 0.9" fill="none" stroke="#2c2c34" stroke-width="2.1"/></svg>
<div class="t" style="top:156.06px;font-size:6.0px;line-height:7.20px;color:#30303a;right:231.00px;transform-origin:100% 50%;transform:scaleX(1.034) skewY(0.05deg);-webkit-text-stroke:0.36px #30303a;-webkit-text-stroke:0.30px #30303a;">Title</div>
<svg style="left:535px;top:156.4px" width="21" height="4.4" viewBox="0 0 21 4.4"><path d="M0 2.2 L17 2.2" stroke="#f01818" stroke-width="1.15"/><path d="M21 2.2 L15.5 0.2 L15.5 4.2 Z" fill="#f01818"/></svg>
<div class="t" style="top:157.86px;font-size:6.0px;line-height:7.20px;color:#3a3a44;left:581.0px;transform-origin:0 50%;transform:scaleX(1.049) skewY(0.05deg);-webkit-text-stroke:0.30px #3a3a44;">All</div>
<svg style="left:669.7px;top:158.3px" width="4.4" height="3" viewBox="0 0 9 6"><path d="M1 0.9 L4.5 4.4 L8 0.9" fill="none" stroke="#2c2c34" stroke-width="2.1"/></svg>
<div class="t" style="top:156.06px;font-size:6.0px;line-height:7.20px;color:#30303a;right:411.40px;transform-origin:100% 50%;transform:scaleX(0.965) skewY(0.05deg);-webkit-text-stroke:0.36px #30303a;-webkit-text-stroke:0.30px #30303a;">Registered</div>
<svg style="left:397.8px;top:154.8px" width="6.4" height="6.4" viewBox="0 0 13 13"><circle cx="6.5" cy="6.5" r="5.6" fill="#e8f0fe" stroke="#4a8ef5" stroke-width="1.3"/><circle cx="6.5" cy="6.5" r="3.9" fill="#2a78f2"/></svg>
<div class="t" style="top:156.26px;font-size:6.0px;line-height:7.20px;color:#3a3a44;left:411.5px;transform-origin:0 50%;transform:scaleX(0.995) skewY(0.05deg);-webkit-text-stroke:0.30px #3a3a44;">Pre-Selected</div>
<div class="t" style="top:157.86px;font-size:6.0px;line-height:7.20px;color:#3a3a44;left:460.6px;transform-origin:0 50%;transform:scaleX(1.049) skewY(0.05deg);-webkit-text-stroke:0.30px #3a3a44;">All</div>
<svg style="left:525.4px;top:158.3px" width="4.4" height="3" viewBox="0 0 9 6"><path d="M1 0.9 L4.5 4.4 L8 0.9" fill="none" stroke="#2c2c34" stroke-width="2.1"/></svg>
<svg style="left:368.3px;top:172.0px" width="25.69999999999999" height="4.4" viewBox="0 0 25.69999999999999 4.4"><path d="M0 2.2 L21.69999999999999 2.2" stroke="#f01818" stroke-width="1.15"/><path d="M25.69999999999999 2.2 L20.19999999999999 0.2 L20.19999999999999 4.2 Z" fill="#f01818"/></svg>
<svg style="left:397.8px;top:171px" width="6.4" height="6.4" viewBox="0 0 13 13"><circle cx="6.5" cy="6.5" r="5.4" fill="#fff" stroke="#77777f" stroke-width="1.3"/></svg>
<div class="t" style="top:172.46px;font-size:6.0px;line-height:7.20px;color:#3a3a44;left:413.8px;transform-origin:0 50%;transform:scaleX(0.943) skewY(0.05deg);-webkit-text-stroke:0.30px #3a3a44;">Exact Dates</div>
<div class="t" style="top:171.87px;font-size:6.6px;line-height:7.92px;color:#787882;left:470.5px;transform-origin:0 50%;transform:scaleX(0.877) skewY(0.05deg);">From</div>
<div class="t" style="top:171.87px;font-size:6.6px;line-height:7.92px;color:#787882;left:541.3px;transform-origin:0 50%;transform:scaleX(0.861) skewY(0.05deg);">To</div>
<div class="t" style="top:188.60px;font-size:6.4px;line-height:7.68px;color:#fff;font-weight:bold;left:715.10px;width:18.41px;text-align:center;transform-origin:50% 50%;transform:scaleX(0.931) skewY(0.05deg);">Reset</div>
<div class="t" style="top:188.60px;font-size:6.4px;line-height:7.68px;color:#fff;font-weight:bold;left:753.94px;width:22.33px;text-align:center;transform-origin:50% 50%;transform:scaleX(0.914) skewY(0.05deg);">Search</div>
<svg style="left:122.3px;top:216.6px" width="4.4" height="5.2" viewBox="0 0 9 11"><path d="M0.5 2 L8.5 2 M3 2 L3.4 0.6 L5.6 0.6 L6 2 M1.6 3 L2.2 10.4 L6.8 10.4 L7.4 3 Z" fill="#b4b4ba" stroke="#b4b4ba" stroke-width="0.8"/></svg>
<div class="t" style="top:217.33px;font-size:5.9px;line-height:7.08px;color:#aeaeb6;font-weight:bold;left:129.6px;transform-origin:0 50%;transform:scaleX(1.002) skewY(0.05deg);">Delete selected</div>
<svg style="left:629.4px;top:216.9px" width="5" height="5" viewBox="0 0 10 10"><circle cx="4" cy="4" r="3" fill="none" stroke="#444" stroke-width="1.5"/><path d="M6.2 6.2 L9.4 9.4" stroke="#444" stroke-width="1.7"/></svg>
<div class="t" style="top:240.41px;font-size:7.0px;line-height:8.40px;color:#33333c;font-weight:bold;left:131.5px;transform-origin:0 50%;transform:scaleX(0.974) skewY(0.05deg);">Last Name</div>
<div class="t" style="top:240.41px;font-size:7.0px;line-height:8.40px;color:#33333c;font-weight:bold;left:211px;transform-origin:0 50%;transform:scaleX(0.981) skewY(0.05deg);">First Name</div>
<div class="t" style="top:240.41px;font-size:7.0px;line-height:8.40px;color:#33333c;font-weight:bold;left:290.5px;transform-origin:0 50%;transform:scaleX(0.991) skewY(0.05deg);">E-mail/Sales channel</div>
<div class="t" style="top:235.11px;font-size:7.0px;line-height:8.40px;color:#33333c;font-weight:bold;right:362.70px;transform-origin:100% 50%;transform:scaleX(0.982) skewY(0.05deg);">Account</div>
<div class="t" style="top:245.01px;font-size:7.0px;line-height:8.40px;color:#33333c;font-weight:bold;right:362.70px;transform-origin:100% 50%;transform:scaleX(1.035) skewY(0.05deg);">Created</div>
<div class="t" style="top:240.41px;font-size:7.0px;line-height:8.40px;color:#33333c;font-weight:bold;left:449.71px;width:30.17px;text-align:center;transform-origin:50% 50%;transform:scaleX(0.960) skewY(0.05deg);">Location</div>
<div class="t" style="top:235.11px;font-size:7.0px;line-height:8.40px;color:#33333c;font-weight:bold;right:284.40px;transform-origin:100% 50%;transform:scaleX(0.997) skewY(0.05deg);">Order</div>
<div class="t" style="top:245.01px;font-size:7.0px;line-height:8.40px;color:#33333c;font-weight:bold;right:284.40px;transform-origin:100% 50%;transform:scaleX(0.997) skewY(0.05deg);">count</div>
<div class="t" style="top:235.11px;font-size:7.0px;line-height:8.40px;color:#33333c;font-weight:bold;right:241.00px;transform-origin:100% 50%;transform:scaleX(1.018) skewY(0.05deg);">Total</div>
<div class="t" style="top:245.01px;font-size:7.0px;line-height:8.40px;color:#33333c;font-weight:bold;right:241.00px;transform-origin:100% 50%;transform:scaleX(1.017) skewY(0.05deg);">ordered</div>
<div class="t" style="top:240.41px;font-size:7.0px;line-height:8.40px;color:#33333c;font-weight:bold;right:162.40px;transform-origin:100% 50%;transform:scaleX(0.990) skewY(0.05deg);">Date of last order</div>
<svg style="left:131.8px;top:268.7px" width="4.2" height="7.3" viewBox="0 0 7 12" preserveAspectRatio="none"><circle cx="3.5" cy="1.6" r="1.6" fill="#1e78f2"/><path d="M0.4 4.6 C0.4 3.8 1 3.4 1.8 3.4 L5.2 3.4 C6 3.4 6.6 3.8 6.6 4.6 L6.6 7.6 L5.6 7.6 L5.6 12 L3.8 12 L3.8 8.4 L3.2 8.4 L3.2 12 L1.4 12 L1.4 7.6 L0.4 7.6 Z" fill="#1e78f2"/></svg>
<div class="t" style="top:269.67px;font-size:6.3px;line-height:7.56px;color:#2a2a32;font-weight:bold;left:138.3px;transform-origin:0 50%;transform:scaleX(0.988) skewY(0.05deg);-webkit-text-stroke:0.19px #2a2a32;">Chong</div>
<div class="t" style="top:269.67px;font-size:6.3px;line-height:7.56px;color:#2a2a32;font-weight:bold;left:211px;transform-origin:0 50%;transform:scaleX(0.802) skewY(0.05deg);-webkit-text-stroke:0.19px #2a2a32;">Li</div>
<div class="t" style="top:261.17px;font-size:6.3px;line-height:7.56px;color:#1a6fd4;font-weight:bold;left:290.5px;transform-origin:0 50%;transform:scaleX(0.968) skewY(0.05deg);-webkit-text-stroke:0.19px #1a6fd4;">Li.Chong@holbi.co.uk</div>
<div class="t" style="top:269.57px;font-size:6.3px;line-height:7.56px;color:#2a2a32;font-weight:bold;left:290.5px;transform-origin:0 50%;transform:scaleX(0.862) skewY(0.05deg);-webkit-text-stroke:0.19px #2a2a32;">Basic</div>
<div class="t" style="top:278.07px;font-size:6.3px;line-height:7.56px;color:#2a2a32;font-weight:bold;left:290.6px;transform-origin:0 50%;transform:scaleX(0.941) skewY(0.05deg);-webkit-text-stroke:0.19px #2a2a32;">Sales channel:</div>
<div class="t" style="top:278.07px;font-size:6.3px;line-height:7.56px;color:#55555e;left:334px;transform-origin:0 50%;transform:scaleX(0.952) skewY(0.05deg);">Demomode</div>
<div class="t" style="top:269.70px;font-size:6.4px;line-height:7.68px;color:#787882;right:362.70px;transform-origin:100% 50%;transform:scaleX(0.966) skewY(0.05deg);-webkit-text-stroke:0.32px #787882;">02 Jun 2016</div>
<svg style="left:443.6px;top:269.8px" width="5.4" height="5.4" viewBox="0 0 10 10"><circle cx="5" cy="5" r="5" fill="#1a73d8"/><rect x="4.1" y="4.1" width="1.8" height="3.9" fill="#fff"/><circle cx="5" cy="2.6" r="1" fill="#fff"/></svg>
<div class="t" style="top:269.70px;font-size:6.4px;line-height:7.68px;color:#787882;right:320.80px;transform-origin:100% 50%;transform:scaleX(1.008) skewY(0.05deg);-webkit-text-stroke:0.32px #787882;">225700</div>
<div class="t" style="top:269.67px;font-size:6.3px;line-height:7.56px;color:#2a2a32;font-weight:bold;right:284.70px;transform-origin:100% 50%;transform:scaleX(1.000) skewY(0.05deg);-webkit-text-stroke:0.19px #2a2a32;">1</div>
<div class="t" style="top:269.67px;font-size:6.3px;line-height:7.56px;color:#2a2a32;font-weight:bold;right:241.00px;transform-origin:100% 50%;transform:scaleX(1.053) skewY(0.05deg);-webkit-text-stroke:0.19px #2a2a32;">£1,308.48</div>
<div class="t" style="top:264.87px;font-size:6.3px;line-height:7.56px;color:#2a2a32;font-weight:bold;right:162.40px;transform-origin:100% 50%;transform:scaleX(0.990) skewY(0.05deg);-webkit-text-stroke:0.19px #2a2a32;">22 Jul 2022 19:12:07</div>
<div class="t" style="top:274.83px;font-size:5.9px;line-height:7.08px;color:#6a6a74;right:162.40px;transform-origin:100% 50%;transform:scaleX(1.006) skewY(0.05deg);">5 months 5 days ago</div>
<svg style="left:131.8px;top:301.3px" width="4.2" height="7.3" viewBox="0 0 7 12" preserveAspectRatio="none"><circle cx="3.5" cy="1.6" r="1.6" fill="#1e78f2"/><path d="M0.4 4.6 C0.4 3.8 1 3.4 1.8 3.4 L5.2 3.4 C6 3.4 6.6 3.8 6.6 4.6 L6.6 7.6 L5.6 7.6 L5.6 12 L3.8 12 L3.8 8.4 L3.2 8.4 L3.2 12 L1.4 12 L1.4 7.6 L0.4 7.6 Z" fill="#1e78f2"/></svg>
<div class="t" style="top:302.27px;font-size:6.3px;line-height:7.56px;color:#2a2a32;font-weight:bold;left:138.3px;transform-origin:0 50%;transform:scaleX(0.952) skewY(0.05deg);-webkit-text-stroke:0.19px #2a2a32;">Cross</div>
<div class="t" style="top:302.27px;font-size:6.3px;line-height:7.56px;color:#2a2a32;font-weight:bold;left:211px;transform-origin:0 50%;transform:scaleX(0.977) skewY(0.05deg);-webkit-text-stroke:0.19px #2a2a32;">Mandy</div>
<div class="t" style="top:293.77px;font-size:6.3px;line-height:7.56px;color:#1a6fd4;font-weight:bold;left:290.5px;transform-origin:0 50%;transform:scaleX(0.975) skewY(0.05deg);-webkit-text-stroke:0.19px #1a6fd4;">Mandy.Cross@holbi.co.uk</div>
<div class="t" style="top:302.17px;font-size:6.3px;line-height:7.56px;color:#2a2a32;font-weight:bold;left:290.5px;transform-origin:0 50%;transform:scaleX(0.862) skewY(0.05deg);-webkit-text-stroke:0.19px #2a2a32;">Basic</div>
<div class="t" style="top:310.67px;font-size:6.3px;line-height:7.56px;color:#2a2a32;font-weight:bold;left:290.6px;transform-origin:0 50%;transform:scaleX(0.941) skewY(0.05deg);-webkit-text-stroke:0.19px #2a2a32;">Sales channel:</div>
<div class="t" style="top:310.67px;font-size:6.3px;line-height:7.56px;color:#55555e;left:334px;transform-origin:0 50%;transform:scaleX(0.952) skewY(0.05deg);">Demomode</div>
<div class="t" style="top:302.30px;font-size:6.4px;line-height:7.68px;color:#787882;right:362.70px;transform-origin:100% 50%;transform:scaleX(0.920) skewY(0.05deg);-webkit-text-stroke:0.32px #787882;">31 May 2016</div>
<svg style="left:443.6px;top:302.40000000000003px" width="5.4" height="5.4" viewBox="0 0 10 10"><circle cx="5" cy="5" r="5" fill="#1a73d8"/><rect x="4.1" y="4.1" width="1.8" height="3.9" fill="#fff"/><circle cx="5" cy="2.6" r="1" fill="#fff"/></svg>
<div class="t" style="top:302.30px;font-size:6.4px;line-height:7.68px;color:#787882;right:320.80px;transform-origin:100% 50%;transform:scaleX(0.963) skewY(0.05deg);-webkit-text-stroke:0.32px #787882;">NW5 2JB</div>
<div class="t" style="top:302.27px;font-size:6.3px;line-height:7.56px;color:#2a2a32;font-weight:bold;right:284.70px;transform-origin:100% 50%;transform:scaleX(1.000) skewY(0.05deg);-webkit-text-stroke:0.19px #2a2a32;">1</div>
<div class="t" style="top:302.27px;font-size:6.3px;line-height:7.56px;color:#2a2a32;font-weight:bold;right:241.00px;transform-origin:100% 50%;transform:scaleX(1.038) skewY(0.05deg);-webkit-text-stroke:0.19px #2a2a32;">£75.99</div>
<div class="t" style="top:297.47px;font-size:6.3px;line-height:7.56px;color:#2a2a32;font-weight:bold;right:162.40px;transform-origin:100% 50%;transform:scaleX(0.990) skewY(0.05deg);-webkit-text-stroke:0.19px #2a2a32;">22 Jul 2022 19:12:51</div>
<div class="t" style="top:307.43px;font-size:5.9px;line-height:7.08px;color:#6a6a74;right:162.40px;transform-origin:100% 50%;transform:scaleX(1.006) skewY(0.05deg);">5 months 5 days ago</div>
<svg style="left:131.8px;top:333.7px" width="4.2" height="7.3" viewBox="0 0 7 12" preserveAspectRatio="none"><circle cx="3.5" cy="1.6" r="1.6" fill="#1e78f2"/><path d="M0.4 4.6 C0.4 3.8 1 3.4 1.8 3.4 L5.2 3.4 C6 3.4 6.6 3.8 6.6 4.6 L6.6 7.6 L5.6 7.6 L5.6 12 L3.8 12 L3.8 8.4 L3.2 8.4 L3.2 12 L1.4 12 L1.4 7.6 L0.4 7.6 Z" fill="#1e78f2"/></svg>
<div class="t" style="top:334.67px;font-size:6.3px;line-height:7.56px;color:#2a2a32;font-weight:bold;left:138.3px;transform-origin:0 50%;transform:scaleX(0.970) skewY(0.05deg);-webkit-text-stroke:0.19px #2a2a32;">Dalton</div>
<div class="t" style="top:334.67px;font-size:6.3px;line-height:7.56px;color:#2a2a32;font-weight:bold;left:211px;transform-origin:0 50%;transform:scaleX(0.971) skewY(0.05deg);-webkit-text-stroke:0.19px #2a2a32;">Abraham</div>
<div class="t" style="top:326.17px;font-size:6.3px;line-height:7.56px;color:#1a6fd4;font-weight:bold;left:290.5px;transform-origin:0 50%;transform:scaleX(0.966) skewY(0.05deg);-webkit-text-stroke:0.19px #1a6fd4;">Abraham.Dalton@holbi.co.uk</div>
<div class="t" style="top:334.57px;font-size:6.3px;line-height:7.56px;color:#2a2a32;font-weight:bold;left:290.5px;transform-origin:0 50%;transform:scaleX(0.862) skewY(0.05deg);-webkit-text-stroke:0.19px #2a2a32;">Basic</div>
<div class="t" style="top:343.07px;font-size:6.3px;line-height:7.56px;color:#2a2a32;font-weight:bold;left:290.6px;transform-origin:0 50%;transform:scaleX(0.941) skewY(0.05deg);-webkit-text-stroke:0.19px #2a2a32;">Sales channel:</div>
<div class="t" style="top:343.07px;font-size:6.3px;line-height:7.56px;color:#55555e;left:334px;transform-origin:0 50%;transform:scaleX(0.952) skewY(0.05deg);">Demomode</div>
<div class="t" style="top:334.70px;font-size:6.4px;line-height:7.68px;color:#787882;right:362.70px;transform-origin:100% 50%;transform:scaleX(0.920) skewY(0.05deg);-webkit-text-stroke:0.32px #787882;">31 May 2016</div>
<svg style="left:443.6px;top:334.8px" width="5.4" height="5.4" viewBox="0 0 10 10"><circle cx="5" cy="5" r="5" fill="#1a73d8"/><rect x="4.1" y="4.1" width="1.8" height="3.9" fill="#fff"/><circle cx="5" cy="2.6" r="1" fill="#fff"/></svg>
<div class="t" style="top:334.70px;font-size:6.4px;line-height:7.68px;color:#787882;right:320.80px;transform-origin:100% 50%;transform:scaleX(0.963) skewY(0.05deg);-webkit-text-stroke:0.32px #787882;">NG1 3AP</div>
<div class="t" style="top:334.67px;font-size:6.3px;line-height:7.56px;color:#2a2a32;font-weight:bold;right:284.70px;transform-origin:100% 50%;transform:scaleX(1.000) skewY(0.05deg);-webkit-text-stroke:0.19px #2a2a32;">1</div>
<div class="t" style="top:334.67px;font-size:6.3px;line-height:7.56px;color:#2a2a32;font-weight:bold;right:241.00px;transform-origin:100% 50%;transform:scaleX(1.032) skewY(0.05deg);-webkit-text-stroke:0.19px #2a2a32;">£195.00</div>
<div class="t" style="top:329.87px;font-size:6.3px;line-height:7.56px;color:#2a2a32;font-weight:bold;right:162.40px;transform-origin:100% 50%;transform:scaleX(0.990) skewY(0.05deg);-webkit-text-stroke:0.19px #2a2a32;">22 Jul 2022 19:14:25</div>
<div class="t" style="top:339.83px;font-size:5.9px;line-height:7.08px;color:#6a6a74;right:162.40px;transform-origin:100% 50%;transform:scaleX(1.006) skewY(0.05deg);">5 months 5 days ago</div>
<svg style="left:131.8px;top:366.09999999999997px" width="4.2" height="7.3" viewBox="0 0 7 12" preserveAspectRatio="none"><circle cx="3.5" cy="1.6" r="1.6" fill="#1e78f2"/><path d="M0.4 4.6 C0.4 3.8 1 3.4 1.8 3.4 L5.2 3.4 C6 3.4 6.6 3.8 6.6 4.6 L6.6 7.6 L5.6 7.6 L5.6 12 L3.8 12 L3.8 8.4 L3.2 8.4 L3.2 12 L1.4 12 L1.4 7.6 L0.4 7.6 Z" fill="#1e78f2"/></svg>
<div class="t" style="top:367.07px;font-size:6.3px;line-height:7.56px;color:#2a2a32;font-weight:bold;left:138.3px;transform-origin:0 50%;transform:scaleX(0.986) skewY(0.05deg);-webkit-text-stroke:0.19px #2a2a32;">De Vries</div>
<div class="t" style="top:367.07px;font-size:6.3px;line-height:7.56px;color:#2a2a32;font-weight:bold;left:211px;transform-origin:0 50%;transform:scaleX(1.006) skewY(0.05deg);-webkit-text-stroke:0.19px #2a2a32;">Daan</div>
<div class="t" style="top:358.57px;font-size:6.3px;line-height:7.56px;color:#1a6fd4;font-weight:bold;left:290.5px;transform-origin:0 50%;transform:scaleX(0.967) skewY(0.05deg);-webkit-text-stroke:0.19px #1a6fd4;">Daan.DeVries@holbi.co.uk</div>
<div class="t" style="top:366.97px;font-size:6.3px;line-height:7.56px;color:#2a2a32;font-weight:bold;left:290.5px;transform-origin:0 50%;transform:scaleX(0.862) skewY(0.05deg);-webkit-text-stroke:0.19px #2a2a32;">Basic</div>
<div class="t" style="top:375.47px;font-size:6.3px;line-height:7.56px;color:#2a2a32;font-weight:bold;left:290.6px;transform-origin:0 50%;transform:scaleX(0.941) skewY(0.05deg);-webkit-text-stroke:0.19px #2a2a32;">Sales channel:</div>
<div class="t" style="top:375.47px;font-size:6.3px;line-height:7.56px;color:#55555e;left:334px;transform-origin:0 50%;transform:scaleX(0.952) skewY(0.05deg);">Demomode</div>
<div class="t" style="top:367.10px;font-size:6.4px;line-height:7.68px;color:#787882;right:362.70px;transform-origin:100% 50%;transform:scaleX(0.966) skewY(0.05deg);-webkit-text-stroke:0.32px #787882;">01 Jun 2016</div>
<svg style="left:443.6px;top:367.2px" width="5.4" height="5.4" viewBox="0 0 10 10"><circle cx="5" cy="5" r="5" fill="#1a73d8"/><rect x="4.1" y="4.1" width="1.8" height="3.9" fill="#fff"/><circle cx="5" cy="2.6" r="1" fill="#fff"/></svg>
<div class="t" style="top:367.10px;font-size:6.4px;line-height:7.68px;color:#787882;right:320.80px;transform-origin:100% 50%;transform:scaleX(1.028) skewY(0.05deg);-webkit-text-stroke:0.32px #787882;">3525 AT</div>
<div class="t" style="top:367.07px;font-size:6.3px;line-height:7.56px;color:#2a2a32;font-weight:bold;right:284.70px;transform-origin:100% 50%;transform:scaleX(1.000) skewY(0.05deg);-webkit-text-stroke:0.19px #2a2a32;">0</div>
<div class="t" style="top:367.07px;font-size:6.3px;line-height:7.56px;color:#2a2a32;font-weight:bold;right:241.00px;transform-origin:100% 50%;transform:scaleX(1.110) skewY(0.05deg);-webkit-text-stroke:0.19px #2a2a32;">£0.00</div>
<svg style="left:131.8px;top:398.5px" width="4.2" height="7.3" viewBox="0 0 7 12" preserveAspectRatio="none"><circle cx="3.5" cy="1.6" r="1.6" fill="#1e78f2"/><path d="M0.4 4.6 C0.4 3.8 1 3.4 1.8 3.4 L5.2 3.4 C6 3.4 6.6 3.8 6.6 4.6 L6.6 7.6 L5.6 7.6 L5.6 12 L3.8 12 L3.8 8.4 L3.2 8.4 L3.2 12 L1.4 12 L1.4 7.6 L0.4 7.6 Z" fill="#1e78f2"/></svg>
<div class="t" style="top:399.47px;font-size:6.3px;line-height:7.56px;color:#2a2a32;font-weight:bold;left:138.3px;transform-origin:0 50%;transform:scaleX(0.981) skewY(0.05deg);-webkit-text-stroke:0.19px #2a2a32;">dinAlt</div>
<div class="t" style="top:399.47px;font-size:6.3px;line-height:7.56px;color:#2a2a32;font-weight:bold;left:211px;transform-origin:0 50%;transform:scaleX(0.961) skewY(0.05deg);-webkit-text-stroke:0.19px #2a2a32;">Jason</div>
<div class="t" style="top:390.97px;font-size:6.3px;line-height:7.56px;color:#1a6fd4;font-weight:bold;left:290.5px;transform-origin:0 50%;transform:scaleX(0.972) skewY(0.05deg);-webkit-text-stroke:0.19px #1a6fd4;">Jason.dinAlt@holbi.co.uk</div>
<div class="t" style="top:399.37px;font-size:6.3px;line-height:7.56px;color:#2a2a32;font-weight:bold;left:290.5px;transform-origin:0 50%;transform:scaleX(0.862) skewY(0.05deg);-webkit-text-stroke:0.19px #2a2a32;">Basic</div>
<div class="t" style="top:407.87px;font-size:6.3px;line-height:7.56px;color:#2a2a32;font-weight:bold;left:290.6px;transform-origin:0 50%;transform:scaleX(0.941) skewY(0.05deg);-webkit-text-stroke:0.19px #2a2a32;">Sales channel:</div>
<div class="t" style="top:407.87px;font-size:6.3px;line-height:7.56px;color:#55555e;left:334px;transform-origin:0 50%;transform:scaleX(0.952) skewY(0.05deg);">Demomode</div>
<div class="t" style="top:399.50px;font-size:6.4px;line-height:7.68px;color:#787882;right:362.70px;transform-origin:100% 50%;transform:scaleX(0.920) skewY(0.05deg);-webkit-text-stroke:0.32px #787882;">31 May 2016</div>
<svg style="left:443.6px;top:399.6px" width="5.4" height="5.4" viewBox="0 0 10 10"><circle cx="5" cy="5" r="5" fill="#1a73d8"/><rect x="4.1" y="4.1" width="1.8" height="3.9" fill="#fff"/><circle cx="5" cy="2.6" r="1" fill="#fff"/></svg>
<div class="t" style="top:399.50px;font-size:6.4px;line-height:7.68px;color:#787882;right:320.80px;transform-origin:100% 50%;transform:scaleX(0.956) skewY(0.05deg);-webkit-text-stroke:0.32px #787882;">40422</div>
<div class="t" style="top:399.47px;font-size:6.3px;line-height:7.56px;color:#2a2a32;font-weight:bold;right:284.70px;transform-origin:100% 50%;transform:scaleX(1.000) skewY(0.05deg);-webkit-text-stroke:0.19px #2a2a32;">0</div>
<div class="t" style="top:399.47px;font-size:6.3px;line-height:7.56px;color:#2a2a32;font-weight:bold;right:241.00px;transform-origin:100% 50%;transform:scaleX(1.110) skewY(0.05deg);-webkit-text-stroke:0.19px #2a2a32;">£0.00</div>
<div class="t" style="top:238.95px;font-size:8.0px;line-height:9.60px;color:#33333c;font-weight:bold;left:697.67px;width:35.66px;text-align:center;transform-origin:50% 50%;transform:scaleX(0.995) skewY(0.05deg);">Li Chong</div>
<div class="t" style="top:254.37px;font-size:6.9px;line-height:8.28px;color:#484852;right:83.80px;transform-origin:100% 50%;transform:scaleX(1.044) skewY(0.05deg);">Group:</div>
<div class="t" style="top:254.37px;font-size:6.9px;line-height:8.28px;color:#33333c;font-weight:bold;left:717.6px;transform-origin:0 50%;transform:scaleX(0.941) skewY(0.05deg);">Basic</div>
<div class="t" style="top:265.84px;font-size:6.9px;line-height:8.28px;color:#484852;right:83.80px;transform-origin:100% 50%;transform:scaleX(1.056) skewY(0.05deg);">Total ordered</div>
<div class="t" style="top:265.84px;font-size:6.9px;line-height:8.28px;color:#33333c;font-weight:bold;left:717.6px;transform-origin:0 50%;transform:scaleX(1.076) skewY(0.05deg);">£1,308.48</div>
<div class="t" style="top:277.31px;font-size:6.9px;line-height:8.28px;color:#484852;right:83.80px;transform-origin:100% 50%;transform:scaleX(1.030) skewY(0.05deg);">Order count</div>
<div class="t" style="top:277.31px;font-size:6.9px;line-height:8.28px;color:#33333c;font-weight:bold;left:717.6px;transform-origin:0 50%;transform:scaleX(0.780) skewY(0.05deg);">1</div>
<div class="t" style="top:288.78px;font-size:6.9px;line-height:8.28px;color:#484852;right:83.80px;transform-origin:100% 50%;transform:scaleX(1.042) skewY(0.05deg);">Account Created</div>
<div class="t" style="top:288.78px;font-size:6.9px;line-height:8.28px;color:#33333c;font-weight:bold;left:717.6px;transform-origin:0 50%;transform:scaleX(1.036) skewY(0.05deg);">02 Jun 2016</div>
<div class="t" style="top:300.25px;font-size:6.9px;line-height:8.28px;color:#484852;right:83.80px;transform-origin:100% 50%;transform:scaleX(1.049) skewY(0.05deg);">Last Modified</div>
<div class="t" style="top:311.72px;font-size:6.9px;line-height:8.28px;color:#484852;right:83.80px;transform-origin:100% 50%;transform:scaleX(1.035) skewY(0.05deg);">Last Logon</div>
<div class="t" style="top:323.19px;font-size:6.9px;line-height:8.28px;color:#484852;right:83.80px;transform-origin:100% 50%;transform:scaleX(1.056) skewY(0.05deg);">Country</div>
<div class="t" style="top:323.19px;font-size:6.9px;line-height:8.28px;color:#33333c;font-weight:bold;left:717.6px;transform-origin:0 50%;transform:scaleX(0.992) skewY(0.05deg);">China</div>
<div class="t" style="top:334.66px;font-size:6.9px;line-height:8.28px;color:#484852;right:83.80px;transform-origin:100% 50%;transform:scaleX(1.069) skewY(0.05deg);"># of Logons</div>
<div class="t" style="top:346.13px;font-size:6.9px;line-height:8.28px;color:#484852;right:83.80px;transform-origin:100% 50%;transform:scaleX(1.027) skewY(0.05deg);"># of Reviews</div>
<div class="t" style="top:346.13px;font-size:6.9px;line-height:8.28px;color:#33333c;font-weight:bold;left:717.6px;transform-origin:0 50%;transform:scaleX(0.911) skewY(0.05deg);">0</div>
<svg style="left:687px;top:365px" width="4.8" height="6.2" viewBox="0 0 11 14"><path d="M0.5 0.5 L6.5 0.5 L10.5 4.5 L10.5 13.5 L0.5 13.5 Z" fill="#fff"/><path d="M2.6 7 L8.4 7 M2.6 9.2 L8.4 9.2 M2.6 11.4 L8.4 11.4" stroke="#6f4cb4" stroke-width="0.9"/></svg>
<div class="t" style="top:365.33px;font-size:6.2px;line-height:7.44px;color:#fff;font-weight:bold;left:694.7px;transform-origin:0 50%;transform:scaleX(0.906) skewY(0.05deg);">Create new order</div>
<div class="t" style="top:383.46px;font-size:6.0px;line-height:7.20px;color:#fff;font-weight:bold;left:682.5px;transform-origin:0 50%;transform:scaleX(0.882) skewY(0.05deg);">Edit</div>
<svg style="left:674.5px;top:383px" width="5" height="5" viewBox="0 0 10 10"><path d="M0.5 9.5 L1 7 L7 1 L9 3 L3 9 Z" fill="#fff"/></svg>
<div class="t" style="top:383.46px;font-size:6.0px;line-height:7.20px;color:#fff;font-weight:bold;left:739px;transform-origin:0 50%;transform:scaleX(0.999) skewY(0.05deg);">Delete</div>
<svg style="left:731.5px;top:382.6px" width="4.4" height="5.4" viewBox="0 0 9 11"><path d="M0.5 2 L8.5 2 M3 2 L3.4 0.6 L5.6 0.6 L6 2 M1.6 3 L2.2 10.4 L6.8 10.4 L7.4 3 Z" fill="#fff" stroke="#fff" stroke-width="0.8"/></svg>
<div class="t" style="top:400.16px;font-size:6.0px;line-height:7.20px;color:#fff;font-weight:bold;left:679px;transform-origin:0 50%;transform:scaleX(0.940) skewY(0.05deg);">Orders</div>
<svg style="left:671.5px;top:399.2px" width="4.6" height="5.6" viewBox="0 0 11 14"><path d="M1 1 L6.5 1 L10 4.5 L10 13 L1 13 Z" fill="none" stroke="#fff" stroke-width="1.6"/></svg>
<div class="t" style="top:400.16px;font-size:6.0px;line-height:7.20px;color:#fff;font-weight:bold;left:741px;transform-origin:0 50%;transform:scaleX(0.937) skewY(0.05deg);">Email</div>
<svg style="left:732.5px;top:399.6px" width="6" height="4.8" viewBox="0 0 12 10"><rect x="0.8" y="0.8" width="10.4" height="8.4" fill="none" stroke="#fff" stroke-width="1.5"/><path d="M1 1.4 L6 5.6 L11 1.4" fill="none" stroke="#fff" stroke-width="1.3"/></svg>
</div></body></html>
